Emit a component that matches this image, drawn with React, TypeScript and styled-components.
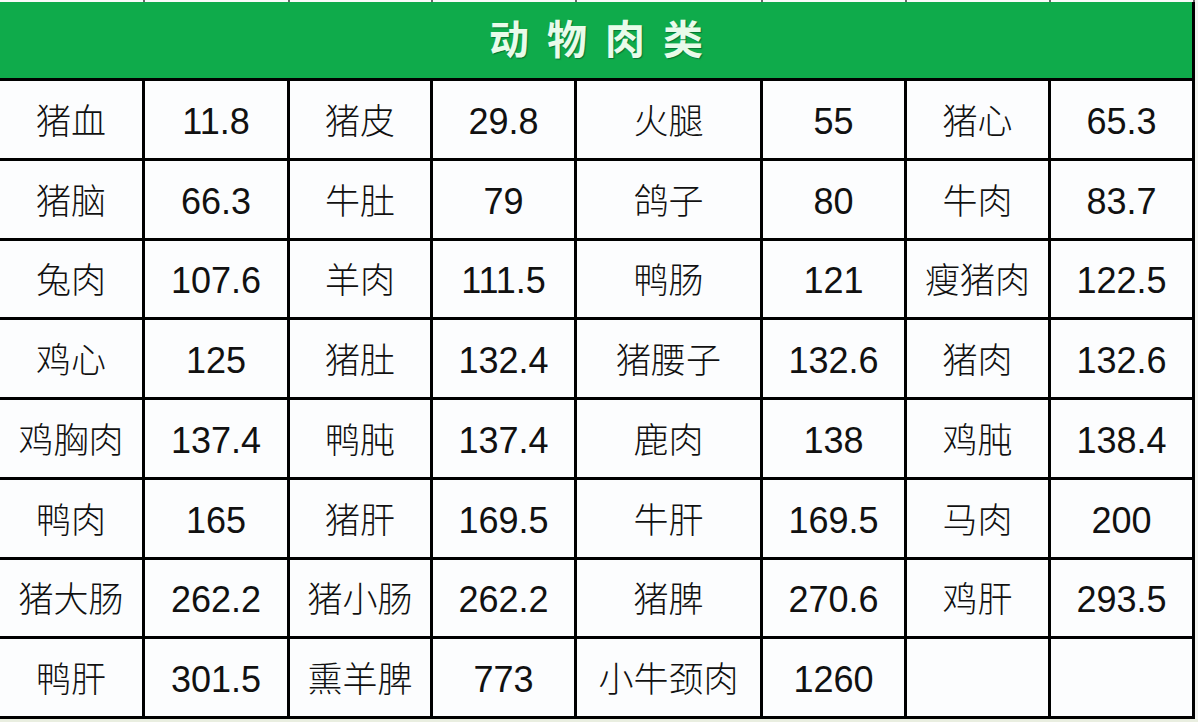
import styled, { createGlobalStyle } from "styled-components"

const GlobalStyle = createGlobalStyle`
  html, body {
    margin: 0;
    padding: 0;
    background: #f3f4f1;
  }
  body {
    width: 1198px;
    height: 722px;
    overflow: hidden;
  }
`

const COLUMNS = "145px 145px 143px 144px 186px 144px 144px 144px"

const rows: string[][] = [
  ["猪血", "11.8", "猪皮", "29.8", "火腿", "55", "猪心", "65.3"],
  ["猪脑", "66.3", "牛肚", "79", "鸽子", "80", "牛肉", "83.7"],
  ["兔肉", "107.6", "羊肉", "111.5", "鸭肠", "121", "瘦猪肉", "122.5"],
  ["鸡心", "125", "猪肚", "132.4", "猪腰子", "132.6", "猪肉", "132.6"],
  ["鸡胸肉", "137.4", "鸭肫", "137.4", "鹿肉", "138", "鸡肫", "138.4"],
  ["鸭肉", "165", "猪肝", "169.5", "牛肝", "169.5", "马肉", "200"],
  ["猪大肠", "262.2", "猪小肠", "262.2", "猪脾", "270.6", "鸡肝", "293.5"],
  ["鸭肝", "301.5", "熏羊脾", "773", "小牛颈肉", "1260", "", ""],
]

export default function App() {
  return (
    <>
      <GlobalStyle />
      <Sheet>
        <TopStrip>
          {Array.from({ length: 8 }).map((_, i) => (
            <StripCell key={i} />
          ))}
        </TopStrip>
        <Header>动物肉类</Header>
        {rows.map((row, r) => (
          <Row key={r}>
            {row.map((text, c) => (
              <Cell key={c} $numeric={c % 2 === 1}>
                {text}
              </Cell>
            ))}
          </Row>
        ))}
      </Sheet>
      <BottomEdge />
    </>
  )
}

const Sheet = styled.div`
  width: 1195px;
  display: flex;
  flex-direction: column;
  background: #fcfdfe;
`

const TopStrip = styled.div`
  display: grid;
  grid-template-columns: ${COLUMNS};
  height: 2px;
  background: #fafafa;
`

const StripCell = styled.div`
  border-right: 2px solid #6a6a6a;
`

const Header = styled.div`
  height: 79px;
  display: flex;
  align-items: center;
  justify-content: center;
  padding-left: 18px;
  padding-bottom: 6px;
  box-sizing: border-box;
  background: #0fab4b;
  border-right: 3px solid #000;
  border-bottom: 3px solid #000;
  color: #e8fbea;
  font-family: "Noto Sans CJK SC", "Noto Sans", sans-serif;
  font-weight: 700;
  font-size: 40px;
  letter-spacing: 18px;
  text-shadow: 1px 1px 1px rgba(0, 70, 30, 0.55);
`

const Row = styled.div`
  display: grid;
  grid-template-columns: ${COLUMNS};
  height: 79.75px;
`

const Cell = styled.div<{ $numeric: boolean }>`
  display: flex;
  align-items: center;
  justify-content: center;
  border-right: 3px solid #000;
  border-bottom: 3px solid #000;
  color: #111;
  white-space: nowrap;
  font-family: ${(p) =>
    p.$numeric
      ? `"Liberation Sans", Arial, sans-serif`
      : `"Noto Sans CJK SC", "Noto Sans", sans-serif`};
  font-size: ${(p) => (p.$numeric ? "36px" : "35px")};
  font-weight: ${(p) => (p.$numeric ? 400 : 300)};
  padding-top: ${(p) => (p.$numeric ? "5px" : "0")};
  padding-bottom: ${(p) => (p.$numeric ? "0" : "2px")};
`

const BottomEdge = styled.div`
  width: 1198px;
  height: 3px;
  background: #e9eee0;
`
